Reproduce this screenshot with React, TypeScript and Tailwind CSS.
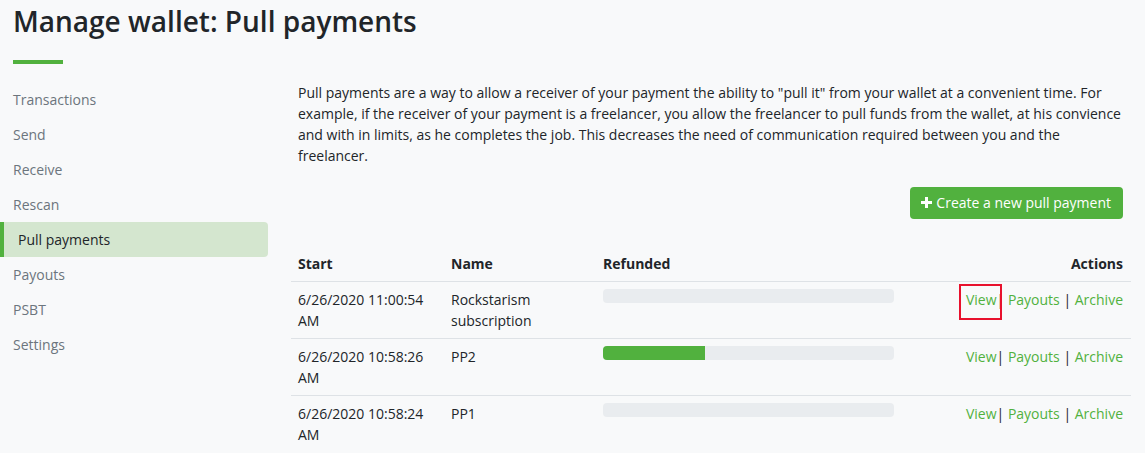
import React from "react";

const nav = ["Transactions", "Send", "Receive", "Rescan", "Pull payments", "Payouts", "PSBT", "Settings"];

const rows = [
  { start: ["6/26/2020 11:00:54", "AM"], name: ["Rockstarism", "subscription"], pct: 0, highlight: true },
  { start: ["6/26/2020 10:58:26", "AM"], name: ["PP2"], pct: 35, highlight: false },
  { start: ["6/26/2020 10:58:24", "AM"], name: ["PP1"], pct: 0, highlight: false },
];

export default function App() {
  return (
    <div
      className="w-[1145px] h-[453px] overflow-hidden bg-[#f8f9fa] text-[#212529]"
      style={{ fontFamily: '"Open Sans", "Noto Sans", sans-serif' }}
    >
      <div className="pl-[13px] pt-[5px]">
        <h2 className="text-[28px] leading-[1.2] font-semibold text-[#212529]">Manage wallet: Pull payments</h2>
        <div className="mt-[21px] w-[50px] h-[4px] bg-[#51b13e]" />
      </div>
      <div className="flex gap-[30px] pr-[22px] mt-[18px]">
        <nav className="w-[268px] shrink-0 flex flex-col">
          {nav.map((n) =>
            n === "Pull payments" ? (
              <div
                key={n}
                className="h-[35px] flex items-center pl-[14px] border-l-[4px] border-[#51b13e] bg-[#d4e6cf] rounded-r-[4px] text-[14px] text-[#212529]"
              >
                {n}
              </div>
            ) : (
              <div key={n} className="h-[35px] flex items-center pl-[13px] text-[14px] text-[#6c757d]">
                {n}
              </div>
            )
          )}
        </nav>
        <main className="flex-1 min-w-0">
          <p className="text-[14px] leading-[21px] text-[#212529]">
            Pull payments are a way to allow a receiver of your payment the ability to "pull it" from your wallet at a
            convenient time. For example, if the receiver of your payment is a freelancer, you allow the freelancer to
            pull funds from the wallet, at his convience and with in limits, as he completes the job. This decreases the
            need of communication required between you and the freelancer.
          </p>
          <div className="flex justify-end mt-[21px]">
            <button className="h-[32px] pl-[11px] pr-[12px] rounded-[4px] bg-[#51b13e] text-white text-[14px] flex items-center gap-[4px]">
              <svg width="11" height="11" viewBox="0 0 11 11">
                <path d="M4 0h3v4h4v3H7v4H4V7H0V4h4z" fill="white" />
              </svg>
              Create a new pull payment
            </button>
          </div>
          <div className="-ml-[7px] -mr-[8px] mt-[28px] text-[14px] leading-[21px]">
            <div className="grid grid-cols-[152px_152px_1fr_229px] border-b border-[#dee2e6] font-bold">
              <div className="px-[7px] pt-[6px] pb-[7px]">Start</div>
              <div className="px-[8px] pt-[6px] pb-[7px]">Name</div>
              <div className="px-[8px] pt-[6px] pb-[7px]">Refunded</div>
              <div className="px-[8px] pt-[6px] pb-[7px] text-right">Actions</div>
            </div>
            {rows.map((r, i) => (
              <div
                key={i}
                className={`grid grid-cols-[152px_152px_1fr_229px] ${i > 0 ? "border-t border-[#dee2e6]" : ""}`}
              >
                <div className="px-[7px] py-[7px]">
                  {r.start[0]}
                  <br />
                  {r.start[1]}
                </div>
                <div className="px-[8px] py-[7px]">
                  {r.name.map((n, j) => (
                    <div key={j}>{n}</div>
                  ))}
                  {r.name.length === 1 && <div>&nbsp;</div>}
                </div>
                <div className="px-[8px] py-[7px]">
                  <div className="h-[14px] rounded-[4px] bg-[#e9ecef] overflow-hidden flex">
                    <div className="h-full bg-[#51b13e]" style={{ width: `${r.pct}%` }} />
                  </div>
                </div>
                <div className="px-[8px] py-[7px] text-right whitespace-nowrap">
                  <span className="relative inline-block">
                    {r.highlight && (
                      <span className="absolute -left-[7px] -right-[5px] -top-[5px] -bottom-[10px] border-2 border-[#e8112d]" />
                    )}
                    <span className="text-[#51b13e]">View</span>
                  </span>
                  {"| "}
                  <span className="text-[#51b13e]">Payouts</span>
                  {" | "}
                  <span className="text-[#51b13e]">Archive</span>
                </div>
              </div>
            ))}
          </div>
        </main>
      </div>
    </div>
  );
}
